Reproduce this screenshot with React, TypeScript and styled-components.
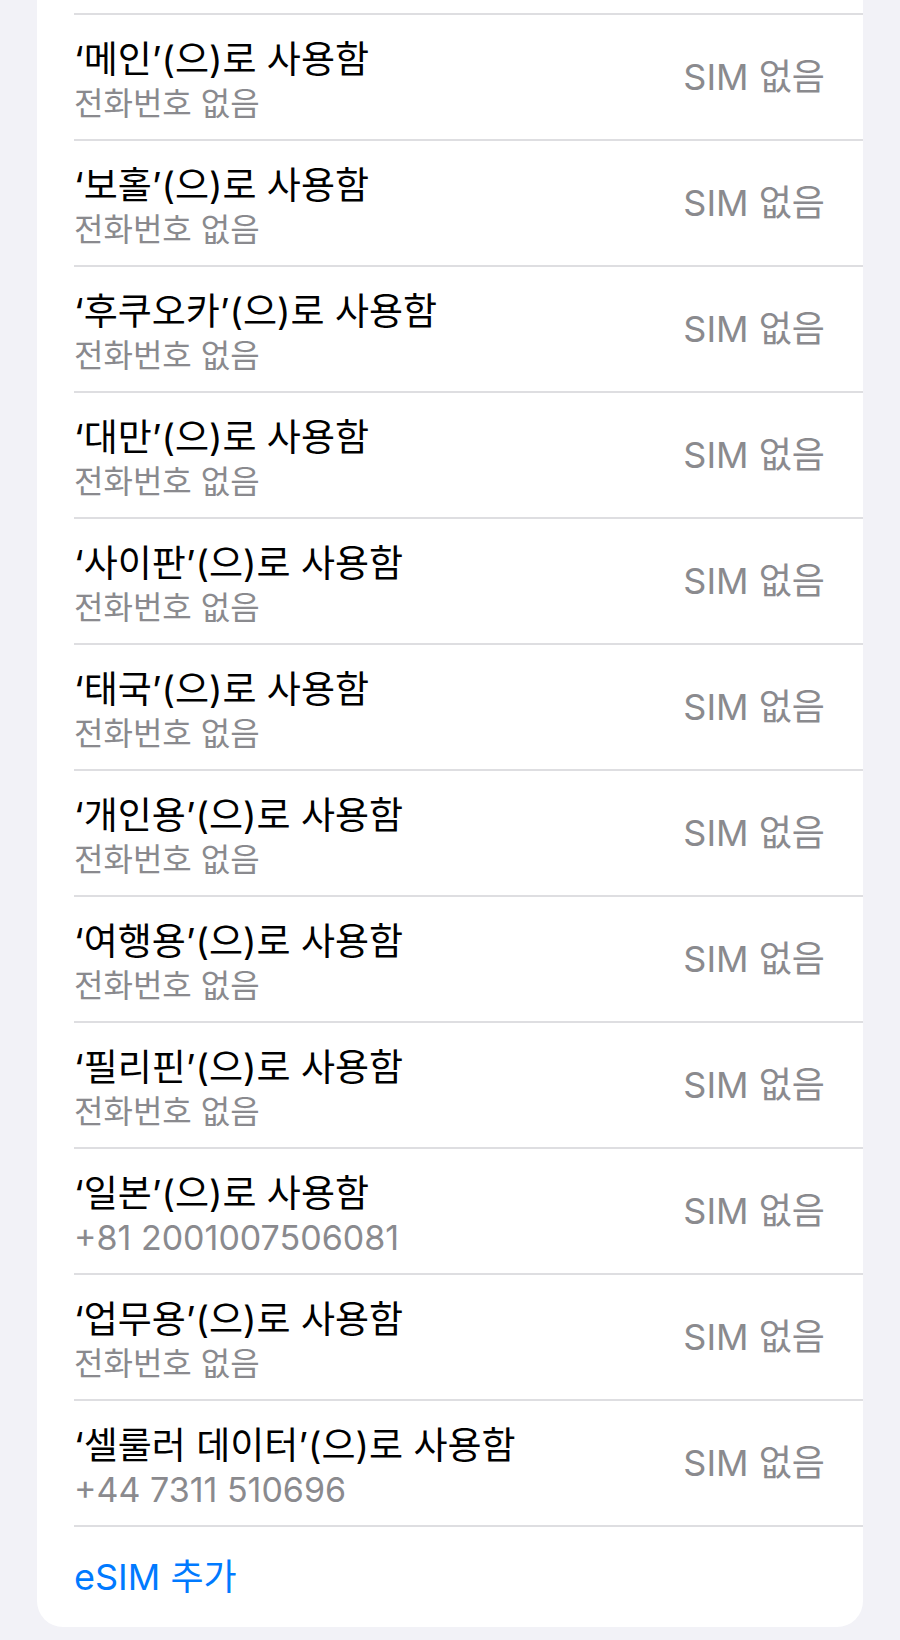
import styled, { createGlobalStyle } from 'styled-components';

interface Line {
  name: string;
  number?: string;
}

const lines: Line[] = [
  { name: '메인' },
  { name: '보홀' },
  { name: '후쿠오카' },
  { name: '대만' },
  { name: '사이판' },
  { name: '태국' },
  { name: '개인용' },
  { name: '여행용' },
  { name: '필리핀' },
  { name: '일본', number: '+81 2001007506081' },
  { name: '업무용' },
  { name: '셀룰러 데이터', number: '+44 7311 510696' },
];

export default function App() {
  return (
    <>
      <GlobalStyle />
      <Page>
        <Card>
          <ClippedRow />
          {lines.map((line) => (
            <Row key={line.name}>
              <Inner>
                <TextBlock>
                  <Title>‘{line.name}’(으)로 사용함</Title>
                  <Subtitle $numeric={!!line.number}>
                    {line.number ?? '전화번호 없음'}
                  </Subtitle>
                </TextBlock>
                <Value>SIM 없음</Value>
              </Inner>
            </Row>
          ))}
          <Row>
            <ActionInner>
              <ActionLabel>eSIM 추가</ActionLabel>
            </ActionInner>
          </Row>
        </Card>
      </Page>
    </>
  );
}

const GlobalStyle = createGlobalStyle`
  html, body {
    margin: 0;
    padding: 0;
    background: #f2f2f7;
  }

  body {
    font-family: Inter, "Noto Sans CJK KR", sans-serif;
    -webkit-font-smoothing: antialiased;
  }
`;

const Page = styled.div`
  padding: 0 37px 13px;
`;

const Card = styled.section`
  background: #ffffff;
  border-radius: 0 0 26px 26px;
  overflow: hidden;
`;

// bottom of the row above, scrolled out of view
const ClippedRow = styled.div`
  height: 13px;
`;

const Row = styled.div`
  padding-left: 37px;
`;

const Inner = styled.div`
  display: flex;
  align-items: center;
  justify-content: space-between;
  height: 124px;
  padding-right: 38px;
  border-top: 2px solid #dedee1;
`;

const TextBlock = styled.div`
  display: flex;
  flex-direction: column;
  padding-top: 5px;
`;

const Title = styled.div`
  font-size: 37px;
  line-height: 44px;
  color: #000000;
  white-space: nowrap;
`;

const Subtitle = styled.div<{ $numeric: boolean }>`
  margin-top: 4px;
  font-size: ${(p) => (p.$numeric ? '34px' : '32px')};
  line-height: 36px;
  color: #8a8a8e;
  white-space: nowrap;
`;

const Value = styled.div`
  font-size: 36px;
  line-height: 42px;
  color: #8a8a8e;
  white-space: nowrap;
`;

const ActionInner = styled.div`
  display: flex;
  align-items: center;
  height: 100px;
  border-top: 2px solid #dedee1;
`;

const ActionLabel = styled.div`
  font-size: 36px;
  line-height: 42px;
  color: #007aff;
`;
